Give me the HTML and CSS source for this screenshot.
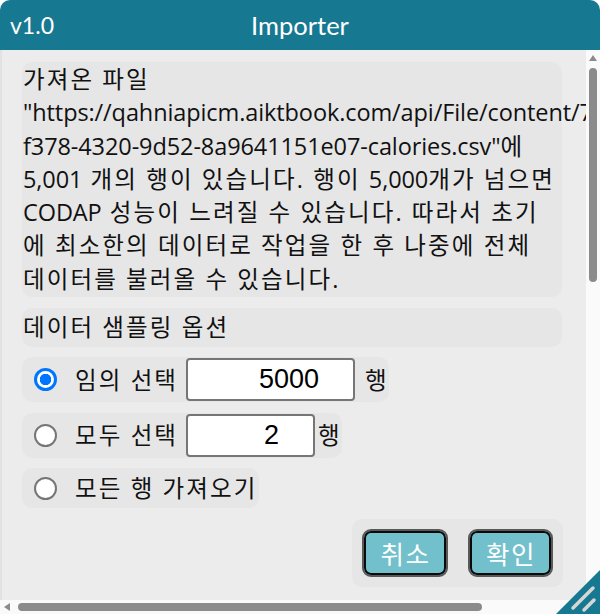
FILE: index.html
```html
<!DOCTYPE html>
<html lang="ko">
<head>
<meta charset="utf-8">
<title>Importer</title>
<link rel="stylesheet" href="styles.css">
</head>
<body>
<div class="window">
  <header class="titlebar">
    <span class="version">v1.0</span>
    <span class="title">Importer</span>
    <span></span>
  </header>
  <div class="frame">
    <div class="viewport">
      <div class="content">
        <div class="panel message">가져온 파일<br><span class="lat">"https://qahniapicm.aiktbook.com/api/File/content/7b2d4e1a-</span><br><span class="lat">f378-4320-9d52-8a9641151e07-calories.csv"</span>에<br><span class="lat">5,001</span> 개의 행이 있습니다. 행이 <span class="lat">5,000</span>개가 넘으면<br><span class="lat">CODAP</span> 성능이 느려질 수 있습니다. 따라서 초기<br>에 최소한의 데이터로 작업을 한 후 나중에 전체<br>데이터를 불러올 수 있습니다.</div>
        <div class="panel heading">데이터 샘플링 옵션</div>
        <label class="panel option">
          <input type="radio" name="mode" class="radio" checked>
          <span class="label">임의 선택</span>
          <input type="text" class="count wide" value="5000">
          <span class="unit">행</span>
        </label>
        <label class="panel option">
          <input type="radio" name="mode" class="radio">
          <span class="label">모두 선택</span>
          <input type="text" class="count narrow" value="2">
          <span class="unit">행</span>
        </label>
        <label class="panel option plain">
          <input type="radio" name="mode" class="radio">
          <span class="label all">모든 행 가져오기</span>
        </label>
        <div class="panel actions">
          <button class="btn">취소</button>
          <button class="btn">확인</button>
        </div>
      </div>
    </div>
    <div class="vscroll">
      <span class="arrow-up"></span>
      <span class="vthumb"></span>
    </div>
    <div class="hscroll">
      <span class="arrow-left"></span>
      <span class="hthumb"></span>
    </div>
    <div class="corner"></div>
  </div>
  <div class="resize">
    <svg width="44" height="44" viewBox="0 0 44 44">
      <polygon points="44,0 44,44 0,44" fill="#177991"/>
      <line x1="17" y1="38" x2="37" y2="18" stroke="#d6d6d6" stroke-width="3.5" stroke-linecap="round"/>
      <line x1="28" y1="40" x2="38" y2="30" stroke="#d6d6d6" stroke-width="3.5" stroke-linecap="round"/>
    </svg>
  </div>
</div>
</body>
</html>
```

FILE: styles.css
```css
* { box-sizing: border-box; }

html, body {
  margin: 0;
  padding: 0;
  background: #ffffff;
}

.window {
  position: relative;
  width: 600px;
  height: 614px;
  display: grid;
  grid-template-rows: 50px 1fr;
  border-radius: 10px 10px 0 0;
  overflow: hidden;
  font-family: "Open Sans", "Noto Sans CJK KR", sans-serif;
}

.titlebar {
  background: #177991;
  color: #ffffff;
  display: grid;
  grid-template-columns: 1fr auto 1fr;
  align-items: center;
  padding: 0 10px;
  font-family: Lato, "Noto Sans", sans-serif;
  font-size: 23px;
}

.version { justify-self: start; }
.title { justify-self: center; font-size: 25.5px; }

.frame {
  display: grid;
  grid-template-columns: 1fr 14px;
  grid-template-rows: 1fr 14px;
  min-height: 0;
}

.viewport {
  overflow: hidden;
  background: #ececec;
  border-left: 2px solid #e2e2e2;
}

.content {
  width: 560px;
  padding: 12px 0 0 20px;
  display: flex;
  flex-direction: column;
  align-items: flex-start;
  gap: 10.5px;
}

.panel {
  background: #e6e6e6;
  border-radius: 10px;
  color: #111111;
  font-size: 23.5px;
  letter-spacing: 2.1px;
}

.lat { letter-spacing: -0.1px; }

.message {
  width: 540px;
  padding: 1px 0 0 1px;
  line-height: 33.3px;
  white-space: nowrap;
  height: 235px;
}

.heading {
  width: 540px;
  height: 39px;
  padding: 0 1px;
  line-height: 38px;
}

.option {
  display: inline-flex;
  align-items: center;
  min-height: 40px;
  padding: 1px 0 1px 12px;
  cursor: default;
}

.radio {
  appearance: none;
  -webkit-appearance: none;
  margin: 0 18px 0 0;
  width: 23px;
  height: 23px;
  border-radius: 50%;
  border: 2px solid #767676;
  background: #ffffff;
  flex: none;
}

.radio:checked {
  border: 3px solid #0075ff;
  background: radial-gradient(circle, #0075ff 0 5.5px, #ffffff 6px);
}

.label {
  margin-right: 8px;
  line-height: 34px;
}

.all {
  margin-right: 0;
  padding-right: 2px;
}

.count {
  height: 43px;
  border: 2px solid #767676;
  border-radius: 4px;
  background: #ffffff;
  font-family: "Liberation Sans", Arial, sans-serif;
  font-size: 27px;
  letter-spacing: 0;
  color: #000000;
  text-align: right;
  padding: 0 34px 0 4px;
  margin: 0 10px 0 0;
}

.wide { width: 169px; }
.narrow { width: 129px; margin-right: 3px; }

.unit { line-height: 34px; }

.actions {
  align-self: flex-end;
  margin-right: -1px;
  display: flex;
  gap: 20px;
  padding: 10px;
  width: 211px;
  height: 68px;
  letter-spacing: 0;
}

.btn {
  width: 86px;
  height: 48px;
  border: 2px solid #595959;
  box-shadow: inset 0 0 0 2px #0a0a0a;
  border-radius: 9px;
  background: #72c0cb;
  color: #ffffff;
  font-family: "Noto Sans CJK KR", sans-serif;
  font-size: 25.5px;
  letter-spacing: 1.5px;
  padding: 0 0 0 1.5px;
  line-height: 40px;
}

.vscroll {
  background: #fafafa;
  display: flex;
  flex-direction: column;
  align-items: center;
  padding-top: 5px;
}

.arrow-up {
  width: 0;
  height: 0;
  border-left: 4px solid transparent;
  border-right: 4px solid transparent;
  border-bottom: 6px solid #8b8b8b;
}

.vthumb {
  margin-top: 7px;
  width: 8px;
  height: 214px;
  border-radius: 4px;
  background: #8b8b8b;
}

.hscroll {
  background: #fafafa;
  display: flex;
  align-items: center;
  padding-left: 4px;
}

.arrow-left {
  width: 0;
  height: 0;
  border-top: 4px solid transparent;
  border-bottom: 4px solid transparent;
  border-right: 6px solid #8b8b8b;
}

.hthumb {
  margin-left: 8px;
  width: 464px;
  height: 8px;
  border-radius: 4px;
  background: #8b8b8b;
}

.corner { background: #fafafa; }

.resize {
  position: absolute;
  right: 0;
  bottom: 0;
  width: 44px;
  height: 44px;
  line-height: 0;
}
```
